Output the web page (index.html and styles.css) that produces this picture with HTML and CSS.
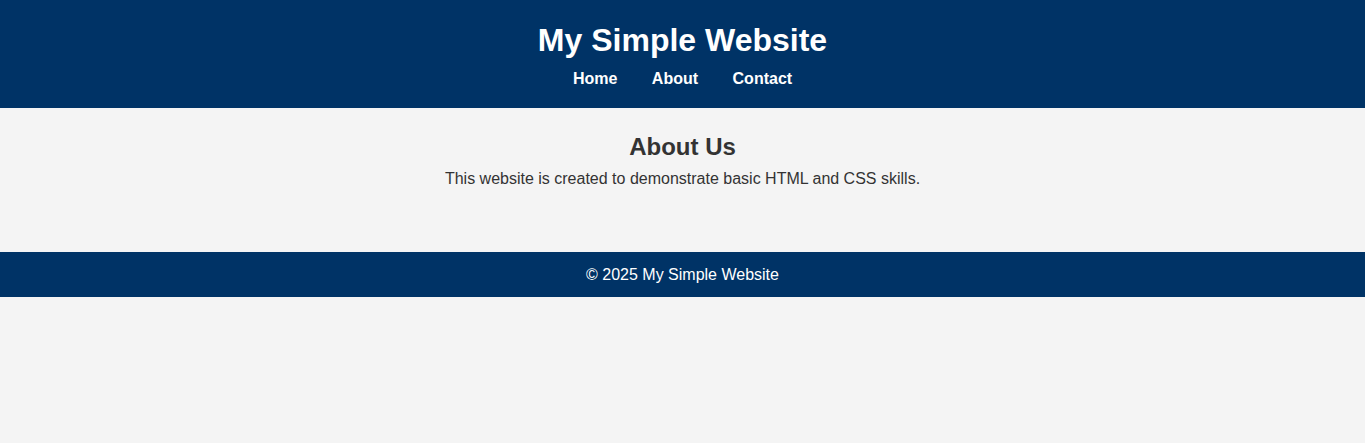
FILE: index.html
```html
<!DOCTYPE html>
<html lang="en">
<head>
<meta charset="utf-8">
<title>My Simple Website</title>
<link rel="stylesheet" href="styles.css">
</head>
<body>
<header class="site-header">
  <h1 class="site-title">My Simple Website</h1>
  <nav class="site-nav">
    <a href="#">Home</a>
    <a href="#">About</a>
    <a href="#">Contact</a>
  </nav>
</header>
<main class="content">
  <h2 class="section-title">About Us</h2>
  <p class="section-text">This website is created to demonstrate basic HTML and CSS skills.</p>
</main>
<footer class="site-footer">&copy; 2025 My Simple Website</footer>
</body>
</html>
```
FILE: styles.css
```css
html, body {
  margin: 0;
  padding: 0;
}
body {
  background: #f4f4f4;
  color: #333;
  font-family: "Liberation Sans", Arial, sans-serif;
  font-size: 16px;
}
.site-header {
  background: #003366;
  color: #fff;
  text-align: center;
  padding: 22px 0 20px;
}
.site-title {
  margin: 0 0 11px;
  font-size: 32px;
  line-height: 37px;
  font-weight: bold;
}
.site-nav {
  display: flex;
  justify-content: center;
  gap: 34.5px;
  line-height: 18px;
}
.site-nav a {
  color: #fff;
  text-decoration: none;
  font-weight: bold;
}
.content {
  text-align: center;
  padding: 25px 20px 64px;
}
.section-title {
  margin: 0 0 9px;
  font-size: 24px;
  line-height: 28px;
}
.section-text {
  margin: 0;
  line-height: 18px;
}
.site-footer {
  background: #003366;
  color: #fff;
  text-align: center;
  padding: 14px 0 13px;
  line-height: 18px;
}
```
